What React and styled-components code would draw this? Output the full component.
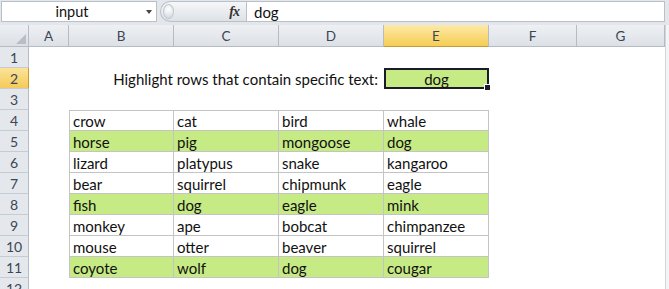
import React from 'react';
import styled, { createGlobalStyle, css } from 'styled-components';

const GlobalStyle = createGlobalStyle`
  html, body {
    margin: 0;
    background: #ffffff;
    overflow: hidden;
  }
`;

const COLS = ['A', 'B', 'C', 'D', 'E', 'F', 'G'];
const GREEN = '#c6ea84';

const ROWS = [
  ['crow', 'cat', 'bird', 'whale'],
  ['horse', 'pig', 'mongoose', 'dog'],
  ['lizard', 'platypus', 'snake', 'kangaroo'],
  ['bear', 'squirrel', 'chipmunk', 'eagle'],
  ['fish', 'dog', 'eagle', 'mink'],
  ['monkey', 'ape', 'bobcat', 'chimpanzee'],
  ['mouse', 'otter', 'beaver', 'squirrel'],
  ['coyote', 'wolf', 'dog', 'cougar'],
];

const Page = styled.div`
  width: 669px;
  height: 289px;
  overflow: hidden;
  font-family: Lato, 'Liberation Sans', sans-serif;
  background: #ffffff;
`;

// Formula bar
const FormulaBar = styled.div`
  display: flex;
  align-items: stretch;
  height: 21px;
  padding: 1px 4px 3px 1px;
  background: #e3e7ec;
`;

const NameBox = styled.div`
  position: relative;
  width: 156px;
  display: flex;
  align-items: center;
  justify-content: center;
  background: #ffffff;
  border: 1px solid #b9c0c9;
  box-sizing: border-box;
  font-size: 14.5px;
  color: #111;
  padding-right: 14px;
`;

const DropArrow = styled.span`
  position: absolute;
  right: 4px;
  top: 8px;
  width: 0;
  height: 0;
  border-left: 3px solid transparent;
  border-right: 3px solid transparent;
  border-top: 4px solid #444;
`;

const Splitter = styled.div`
  width: 86px;
  margin-left: 3px;
  display: flex;
  align-items: center;
  justify-content: space-between;
  padding: 0 7px 0 2px;
  box-sizing: border-box;
  border: 1px solid #b9c0c9;
  border-right: none;
  border-radius: 11px 0 0 11px;
  background: linear-gradient(#f6f7f9, #dde1e6);
`;

const Grip = styled.span`
  width: 11px;
  height: 15px;
  border-radius: 50%;
  background: radial-gradient(circle at 50% 35%, #ffffff, #c9ced6);
  box-shadow: inset 0 0 0 1px #c3c9d1;
`;

const Fx = styled.span`
  font-family: 'Liberation Serif', serif;
  font-style: italic;
  font-weight: bold;
  font-size: 14px;
  color: #333;
  letter-spacing: -1px;
`;

const FormulaInput = styled.div`
  flex: 1;
  display: flex;
  align-items: center;
  padding-left: 7px;
  background: #ffffff;
  border: 1px solid #b9c0c9;
  font-size: 15px;
  color: #111;
`;

// Sheet
const Sheet = styled.div`
  display: grid;
  grid-template-columns: 29px 40px 105px 105px 105px 105px 88px 88px 1fr;
  grid-template-rows: 22px;
  grid-auto-rows: 21px;
`;

const headerBase = css`
  display: flex;
  align-items: center;
  justify-content: center;
  box-sizing: border-box;
  font-size: 13.5px;
  color: #3c4656;
  border-right: 1px solid #b5bcc6;
  border-bottom: 1px solid #b5bcc6;
`;

const Corner = styled.div`
  ${headerBase};
  position: relative;
  background: linear-gradient(#eceff3, #dce0e5);
`;

const CornerMark = styled.svg`
  position: absolute;
  right: 2px;
  bottom: 2px;
`;

const ColHeader = styled.div`
  ${headerBase};
  background: ${(p) =>
    p.$active
      ? 'linear-gradient(#fde9a6, #f6cd55)'
      : 'linear-gradient(#eef0f3, #dde1e6)'};
  border-bottom-color: ${(p) => (p.$active ? '#c49b3a' : '#b5bcc6')};
`;

const RowHeader = styled.div`
  ${headerBase};
  font-size: 14px;
  background: ${(p) => (p.$active ? 'linear-gradient(#fbe39a, #f5cb58)' : '#e4e8ed')};
  border-right-color: ${(p) => (p.$active ? '#c49b3a' : '#b5bcc6')};
  border-bottom-color: #c6ccd4;
`;

const Cell = styled.div`
  display: flex;
  align-items: center;
  box-sizing: border-box;
  padding: 1px 3px 0;
  font-size: 15px;
  color: #111;
  white-space: nowrap;
  background: ${(p) => (p.$fill ? GREEN : '#ffffff')};
  ${(p) =>
    p.$boxed &&
    css`
      border-right: 1px solid #c4c4c4;
      border-bottom: 1px solid #c4c4c4;
    `}
  ${(p) => p.$top && 'border-top: 1px solid #c4c4c4;'}
  ${(p) => p.$left && 'border-left: 1px solid #c4c4c4;'}
`;

const EdgeCell = styled.div`
  border-left: 1px solid #d2d6dc;
  background: #f3f4f6;
`;

const Label = styled(Cell)`
  grid-column: 3 / 6;
  justify-content: flex-end;
  padding-right: 6px;
`;

const InputCell = styled.div`
  position: relative;
  display: flex;
  align-items: center;
  justify-content: center;
  box-sizing: border-box;
  padding-top: 1px;
  background: ${GREEN};
  border: 2px solid #1b1b2a;
  font-size: 15px;
  color: #111;
`;

const FillHandle = styled.span`
  position: absolute;
  right: -4px;
  bottom: -4px;
  width: 5px;
  height: 5px;
  background: #1b1b2a;
  border: 1px solid #ffffff;
`;

const Blank = styled(Cell)``;

const blanks = (n, key) =>
  Array.from({ length: n }, (_, i) => <Blank key={`${key}-${i}`} />);

const App = () => (
  <Page>
    <GlobalStyle />
    <FormulaBar>
      <NameBox>
        input
        <DropArrow />
      </NameBox>
      <Splitter>
        <Grip />
        <Fx>fx</Fx>
      </Splitter>
      <FormulaInput>dog</FormulaInput>
    </FormulaBar>

    <Sheet>
      <Corner>
        <CornerMark width="10" height="10" viewBox="0 0 10 10">
          <polygon points="10,0 10,10 0,10" fill="#b9bec6" />
        </CornerMark>
      </Corner>
      {COLS.map((c) => (
        <ColHeader key={c} $active={c === 'E'}>
          {c}
        </ColHeader>
      ))}
      <EdgeCell />

      {/* row 1 */}
      <RowHeader>1</RowHeader>
      {blanks(7, 'r1')}
      <EdgeCell />

      {/* row 2 */}
      <RowHeader $active>2</RowHeader>
      <Blank />
      <Label>Highlight rows that contain specific text:</Label>
      <InputCell>
        dog
        <FillHandle />
      </InputCell>
      {blanks(2, 'r2')}
      <EdgeCell />

      {/* row 3 */}
      <RowHeader>3</RowHeader>
      {blanks(7, 'r3')}
      <EdgeCell />

      {ROWS.map((row, r) => {
        const fill = row.includes('dog');
        return (
          <React.Fragment key={r}>
            <RowHeader>{r + 4}</RowHeader>
            <Blank />
            {row.map((v, c) => (
              <Cell key={c} $boxed $fill={fill} $top={r === 0} $left={c === 0}>
                {v}
              </Cell>
            ))}
            {blanks(2, `r${r + 4}`)}
            <EdgeCell />
          </React.Fragment>
        );
      })}

      <RowHeader>12</RowHeader>
      {blanks(7, 'r12')}
      <EdgeCell />
    </Sheet>
  </Page>
);

export default App;
